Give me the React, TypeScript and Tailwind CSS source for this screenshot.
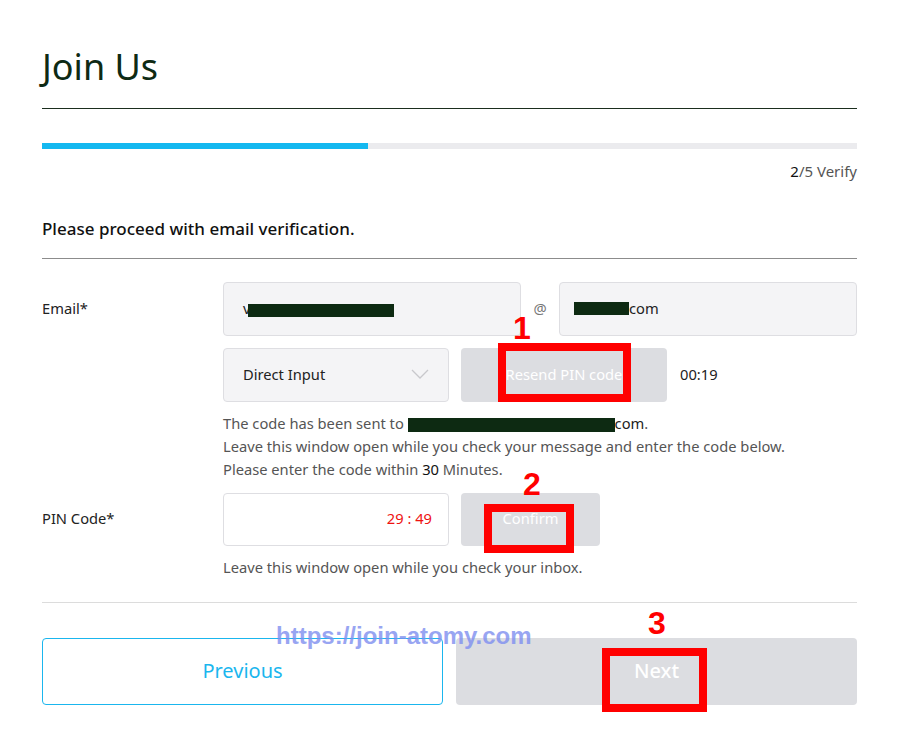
import React from "react";

const font = { fontFamily: '"Noto Sans", "Open Sans", sans-serif' };

function Redact({ w, h = 13 }: { w: number; h?: number }) {
  return <span className="inline-block bg-[#0d2a12] align-middle" style={{ width: w, height: h }} />;
}

export default function App() {
  return (
    <div className="relative w-[900px] h-[744px] bg-white overflow-hidden" style={font}>
      <div className="ml-[42px] w-[815px] flex flex-col">
        {/* Title */}
        <div className="pt-[41px] pb-[15px] border-b border-[#1b2e1e]">
          <h1 className="text-[36px] leading-[52px] text-[#0e2a14] font-normal">Join Us</h1>
        </div>
        {/* Progress */}
        <div className="mt-[34px] h-[6px] bg-[#ebebee] flex">
          <div className="w-[326px] h-full bg-[#14b8f0]" />
        </div>
        <div className="mt-[11px] text-right text-[15px] leading-[22px] text-[#555]">
          <span className="text-[#111]">2</span>/5 Verify
        </div>
        {/* Section heading */}
        <div className="mt-[35px] pb-[17px] border-b border-[#8c8c8c]">
          <p className="text-[17px] leading-[24px] font-medium text-[#111]">Please proceed with email verification.</p>
        </div>

        {/* Email row */}
        <div className="mt-[23px] flex">
          <div className="w-[181px] h-[54px] pb-[2px] flex items-center text-[14.7px] text-[#222]">Email*</div>
          <div className="flex-1 flex flex-col">
            <div className="flex items-center">
              <div className="w-[298px] h-[54px] pb-[2px] rounded-[4px] border border-[#dedee2] bg-[#f4f4f6] flex items-center pl-[19px] text-[14.7px] text-[#222]">
                <span className="text-[#222]">v</span>
                <span className="-ml-[2px]"><Redact w={146} /></span>
              </div>
              <div className="w-[38px] pb-[2px] text-center text-[14.7px] text-[#777]">@</div>
              <div className="w-[298px] h-[54px] pb-[2px] rounded-[4px] border border-[#dedee2] bg-[#f4f4f6] flex items-center pl-[14px] text-[14.7px] text-[#222]">
                <Redact w={55} />
                <span>com</span>
              </div>
            </div>
            <div className="mt-[12px] flex items-center">
              <div className="w-[226px] h-[54px] pb-[2px] rounded-[4px] border border-[#dedee2] bg-[#f4f4f6] flex items-center justify-between pl-[19px] pr-[19px] text-[14.7px] text-[#222]">
                <span>Direct Input</span>
                <svg width="18" height="10" viewBox="0 0 18 10" fill="none">
                  <path d="M1 1 L9 9 L17 1" stroke="#c8c8cc" strokeWidth="1.3" />
                </svg>
              </div>
              <div className="ml-[12px] w-[206px] h-[54px] pb-[2px] rounded-[4px] bg-[#dcdde1] flex items-center justify-center text-[14.7px] text-white">
                Resend PIN code
              </div>
              <div className="ml-[13px] pb-[2px] text-[14.7px] text-[#222]">00:19</div>
            </div>
            <div className="mt-[10px] text-[14.7px] leading-[23px] text-[#555]">
              <div>
                The code has been sent to <Redact w={207} h={14} />
                <span className="text-[#222]">com</span>.
              </div>
              <div>Leave this window open while you check your message and enter the code below.</div>
              <div>
                Please enter the code within <span className="text-[#111]">30</span> Minutes.
              </div>
            </div>
          </div>
        </div>

        {/* PIN row */}
        <div className="mt-[12px] flex">
          <div className="w-[181px] h-[53px] pb-[2px] flex items-center text-[14.7px] text-[#222]">PIN Code*</div>
          <div className="flex-1 flex flex-col">
            <div className="flex items-center">
              <div className="w-[226px] h-[53px] pb-[2px] rounded-[4px] border border-[#dedee2] bg-white flex items-center justify-end pr-[16px] text-[14.7px] text-[#ee1111]">
                29 : 49
              </div>
              <div className="ml-[12px] w-[139px] h-[53px] pb-[2px] rounded-[4px] bg-[#dcdde1] flex items-center justify-center text-[14.7px] text-white">
                Confirm
              </div>
            </div>
            <div className="mt-[10px] text-[14.7px] leading-[23px] text-[#555]">
              Leave this window open while you check your inbox.
            </div>
          </div>
        </div>

        <div className="mt-[23px] border-b border-[#dcdcdc]" />

        {/* Buttons */}
        <div className="mt-[35px] flex gap-[13px]">
          <div className="w-[401px] h-[67px] pb-[2px] rounded-[4px] border border-[#1ab6ee] flex items-center justify-center text-[20px] text-[#1ab6ee]">
            Previous
          </div>
          <div className="w-[401px] h-[67px] pb-[2px] rounded-[4px] bg-[#dcdde1] flex items-center justify-center text-[20px] font-medium text-white">
            Next
          </div>
        </div>
      </div>

      {/* Watermark */}
      <div
        className="absolute left-[276px] top-[622px] text-[24px] leading-[28px] font-bold text-[#7f8ff0] opacity-80"
        style={{ fontFamily: '"Liberation Sans", Arial, sans-serif' }}
      >
        https://join-atomy.com
      </div>

      {/* Annotations */}
      <div className="absolute left-[498px] top-[343px] w-[133px] h-[59px] border-[8px] border-[#ff0000]" />
      <div className="absolute left-[484px] top-[504px] w-[90px] h-[49px] border-[8px] border-[#ff0000]" />
      <div className="absolute left-[602px] top-[648px] w-[105px] h-[64px] border-[8px] border-[#ff0000]" />
      <div
        className="absolute left-[513px] top-[310px] text-[32px] leading-[37px] font-bold text-[#ff0000]"
        style={{ fontFamily: '"Liberation Sans", Arial, sans-serif' }}
      >
        1
      </div>
      <div
        className="absolute left-[523px] top-[466px] text-[32px] leading-[37px] font-bold text-[#ff0000]"
        style={{ fontFamily: '"Liberation Sans", Arial, sans-serif' }}
      >
        2
      </div>
      <div
        className="absolute left-[648px] top-[605px] text-[32px] leading-[37px] font-bold text-[#ff0000]"
        style={{ fontFamily: '"Liberation Sans", Arial, sans-serif' }}
      >
        3
      </div>
    </div>
  );
}
